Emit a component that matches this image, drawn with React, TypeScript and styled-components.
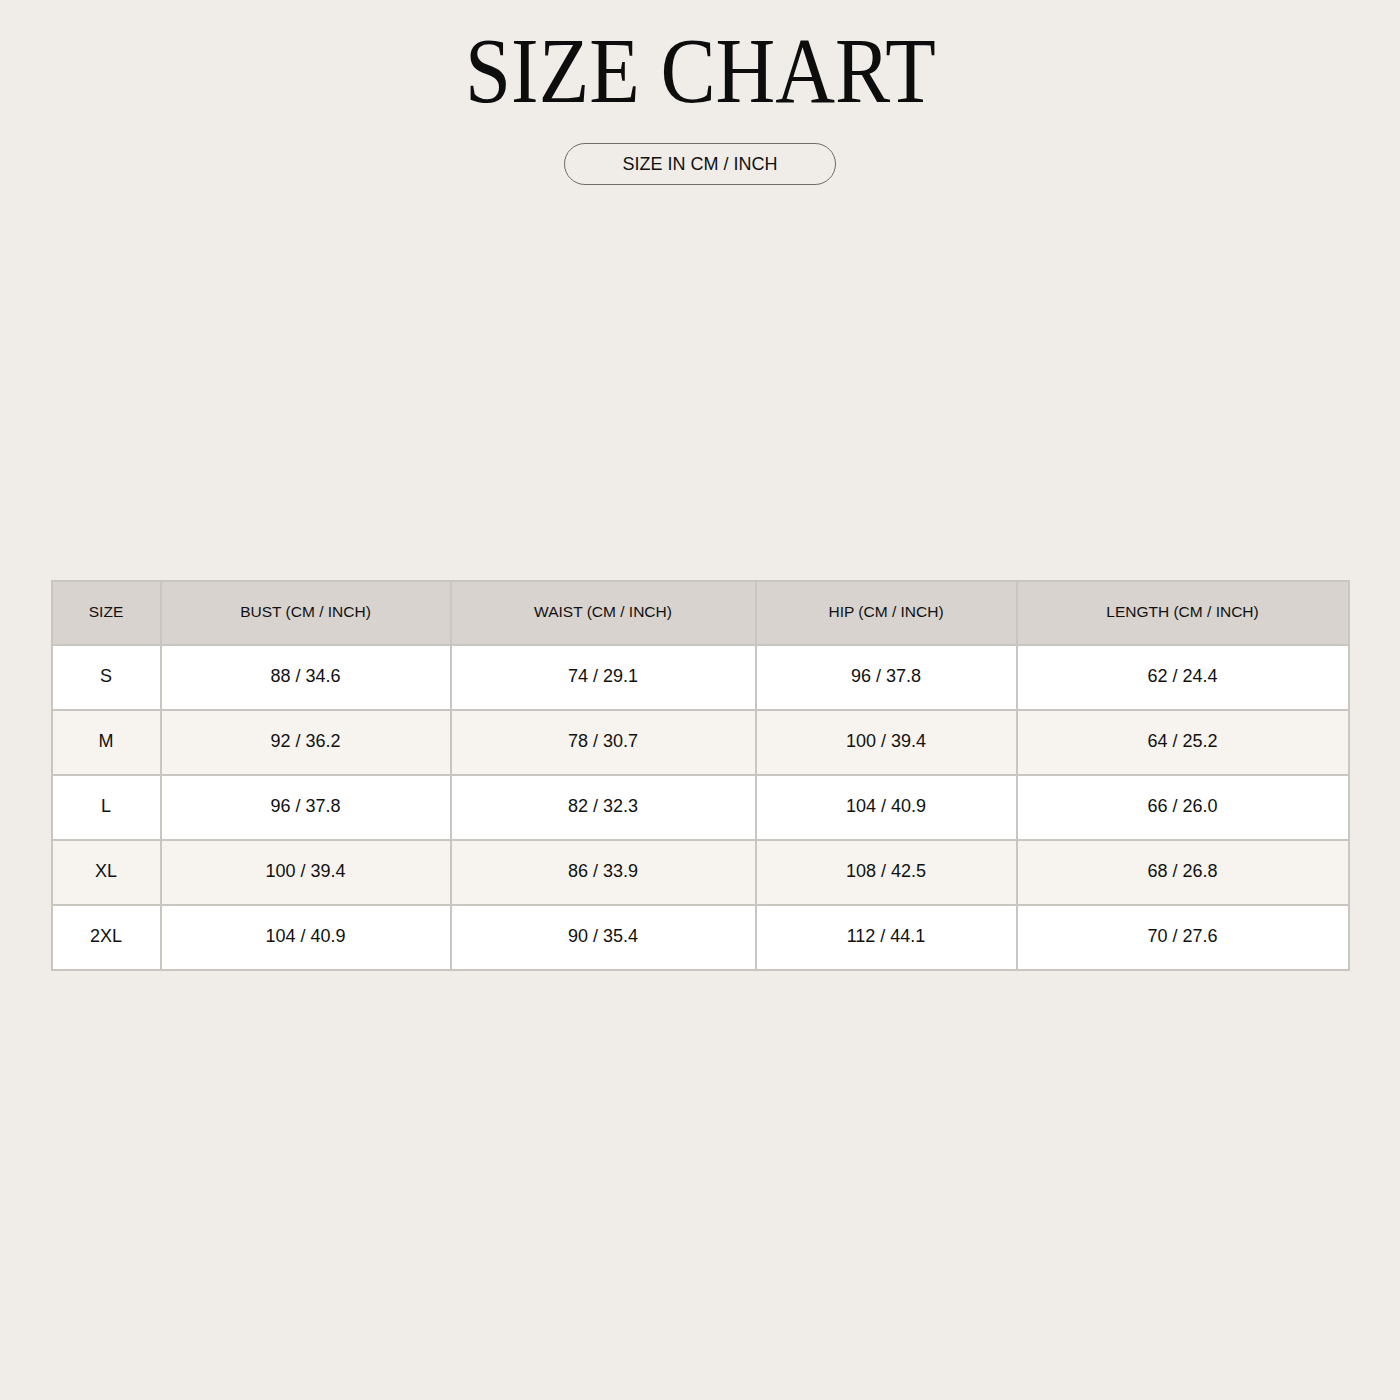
import React from "react";
import styled, { createGlobalStyle } from "styled-components";

const GlobalStyle = createGlobalStyle`
  html, body {
    margin: 0;
    padding: 0;
    background: #f0ede8;
  }
  body {
    font-family: "Liberation Sans", Arial, sans-serif;
    color: #111;
  }
`;

const Page = styled.div`
  width: 1400px;
  height: 1400px;
  display: flex;
  flex-direction: column;
  align-items: center;
  background: #f0ede8;
`;

const Title = styled.h1`
  margin: 20px 0 0;
  font-family: "Liberation Serif", "Times New Roman", serif;
  font-weight: 400;
  font-size: 94px;
  line-height: 100px;
  color: #0d0d0d;
  transform: scaleX(0.88);
`;

const Pill = styled.div`
  margin-top: 23px;
  width: 272px;
  height: 42px;
  box-sizing: border-box;
  border: 1px solid #6f6b67;
  border-radius: 21px;
  display: flex;
  align-items: center;
  justify-content: center;
  font-size: 18px;
  color: #111;
`;

const Table = styled.table`
  margin-top: 395px;
  width: 1297px;
  border-collapse: collapse;
  table-layout: fixed;
  border: 2px solid #c9c5c0;
`;

const HeadCell = styled.th`
  height: 59px;
  padding: 0 0 3px;
  background: #d8d3ce;
  border: 2px solid #c9c5c0;
  font-weight: 400;
  font-size: 15.5px;
  color: #111;
  text-align: center;
`;

const Row = styled.tr<{ $alt: boolean }>`
  background: ${(props) => (props.$alt ? "#f7f4ef" : "#ffffff")};
`;

const Cell = styled.td`
  height: 61px;
  padding: 0 0 2px;
  border: 2px solid #c9c5c0;
  font-size: 18px;
  color: #111;
  text-align: center;
`;

const columns = [
  { label: "SIZE", width: 109 },
  { label: "BUST (CM / INCH)", width: 290 },
  { label: "WAIST (CM / INCH)", width: 305 },
  { label: "HIP (CM / INCH)", width: 261 },
  { label: "LENGTH (CM / INCH)", width: 332 },
];

const rows = [
  ["S", "88 / 34.6", "74 / 29.1", "96 / 37.8", "62 / 24.4"],
  ["M", "92 / 36.2", "78 / 30.7", "100 / 39.4", "64 / 25.2"],
  ["L", "96 / 37.8", "82 / 32.3", "104 / 40.9", "66 / 26.0"],
  ["XL", "100 / 39.4", "86 / 33.9", "108 / 42.5", "68 / 26.8"],
  ["2XL", "104 / 40.9", "90 / 35.4", "112 / 44.1", "70 / 27.6"],
];

const App = () => {
  return (
    <Page>
      <GlobalStyle />
      <Title>SIZE CHART</Title>
      <Pill>SIZE IN CM / INCH</Pill>
      <Table>
        <colgroup>
          {columns.map((col) => (
            <col key={col.label} style={{ width: col.width }} />
          ))}
        </colgroup>
        <thead>
          <tr>
            {columns.map((col) => (
              <HeadCell key={col.label}>{col.label}</HeadCell>
            ))}
          </tr>
        </thead>
        <tbody>
          {rows.map((row, index) => (
            <Row key={row[0]} $alt={index % 2 === 1}>
              {row.map((value, i) => (
                <Cell key={i}>{value}</Cell>
              ))}
            </Row>
          ))}
        </tbody>
      </Table>
    </Page>
  );
};

export default App;
